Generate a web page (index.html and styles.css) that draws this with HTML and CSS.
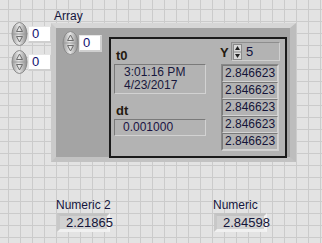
FILE: index.html
```html
<!DOCTYPE html>
<html lang="en">
<head>
  <meta charset="UTF-8">
  <title>Front Panel</title>
  <link rel="stylesheet" href="styles.css">
</head>
<body>
  <div class="panel">

    <div class="ctrl row1">
      <svg class="spin" width="17" height="24" viewBox="0 0 17 24">
        <defs>
          <linearGradient id="sg" x1="0" x2="1" y1="0" y2="0">
            <stop offset="0" stop-color="#9a9a9a"/>
            <stop offset="0.45" stop-color="#e8e8e8"/>
            <stop offset="1" stop-color="#8c8c8c"/>
          </linearGradient>
        </defs>
        <ellipse cx="8.5" cy="12" rx="7.5" ry="11.5" fill="url(#sg)" stroke="#8a8a8a"/>
        <line x1="2" y1="12" x2="15" y2="12" stroke="#9c9c9c"/>
        <path d="M8.5 4 L11.5 9.5 L5.5 9.5 Z" fill="none" stroke="#6e6e6e"/>
        <path d="M8.5 20 L11.5 14.5 L5.5 14.5 Z" fill="none" stroke="#6e6e6e"/>
      </svg>
      <div class="input">0</div>
    </div>

    <div class="ctrl row2">
      <svg class="spin" width="17" height="24" viewBox="0 0 17 24">
        <ellipse cx="8.5" cy="12" rx="7.5" ry="11.5" fill="url(#sg)" stroke="#8a8a8a"/>
        <line x1="2" y1="12" x2="15" y2="12" stroke="#9c9c9c"/>
        <path d="M8.5 4 L11.5 9.5 L5.5 9.5 Z" fill="none" stroke="#6e6e6e"/>
        <path d="M8.5 20 L11.5 14.5 L5.5 14.5 Z" fill="none" stroke="#6e6e6e"/>
      </svg>
      <div class="input">0</div>
    </div>

    <div class="array-ctl">
      <div class="label">Array</div>
      <div class="array-frame">
        <div class="ctrl index">
          <svg class="spin" width="17" height="24" viewBox="0 0 17 24">
            <ellipse cx="8.5" cy="12" rx="7.5" ry="11.5" fill="url(#sg)" stroke="#8a8a8a"/>
            <line x1="2" y1="12" x2="15" y2="12" stroke="#9c9c9c"/>
            <path d="M8.5 4 L11.5 9.5 L5.5 9.5 Z" fill="none" stroke="#6e6e6e"/>
            <path d="M8.5 20 L11.5 14.5 L5.5 14.5 Z" fill="none" stroke="#6e6e6e"/>
          </svg>
          <div class="input">0</div>
        </div>

        <div class="cluster">
          <div class="col-left">
            <div class="clabel t0">t0</div>
            <div class="timebox">
              <div>3:01:16 PM</div>
              <div>4/23/2017</div>
            </div>
            <div class="clabel dt">dt</div>
            <div class="dtbox">0.001000</div>
          </div>
          <div class="col-right">
            <div class="yrow">
              <div class="clabel">Y</div>
              <div class="yindex">
                <svg width="9" height="16" viewBox="0 0 9 16">
                  <rect x="0.5" y="0.5" width="8" height="15" fill="#d8d8d8" stroke="#8a8a8a"/>
                  <line x1="1" y1="8" x2="8" y2="8" stroke="#8a8a8a"/>
                  <path d="M4.5 2 L7 6 L2 6 Z" fill="#222"/>
                  <path d="M4.5 14 L7 10 L2 10 Z" fill="#222"/>
                </svg>
                <span>5</span>
              </div>
            </div>
            <div class="ylist">
              <div class="entry">2.846623</div>
              <div class="entry">2.846623</div>
              <div class="entry">2.846623</div>
              <div class="entry">2.846623</div>
              <div class="entry">2.846623</div>
            </div>
          </div>
        </div>
      </div>
    </div>

    <div class="ind num2">
      <div class="label">Numeric 2</div>
      <div class="display">2.21865</div>
    </div>

    <div class="ind num1">
      <div class="label">Numeric</div>
      <div class="display">2.84598</div>
    </div>

  </div>
</body>
</html>
```

FILE: styles.css
```css
body {
  margin: 0;
  font-family: "Liberation Sans", Arial, sans-serif;
  font-size: 12px;
  color: #14143c;
}
.panel {
  position: relative;
  width: 322px;
  height: 243px;
  overflow: hidden;
  background-color: #e3e3e3;
  background-image:
    linear-gradient(to right, #cbcbcb 1px, transparent 1px),
    linear-gradient(to bottom, #cbcbcb 1px, transparent 1px);
  background-size: 12px 12px;
  background-position: 8px 9px;
}

/* numeric controls */
.ctrl {
  display: flex;
  align-items: center;
}
.row1 { position: absolute; left: 11px; top: 22px; }
.row2 { position: absolute; left: 11px; top: 50px; }
.spin { display: block; }
.input {
  width: 18px;
  height: 14px;
  line-height: 14px;
  padding-left: 3px;
  background: #fff;
  border-top: 1px solid #e6e6e6;
  border-left: 1px solid #e6e6e6;
  border-right: 2px solid #cfcfcf;
  border-bottom: 2px solid #cfcfcf;
  font-size: 13px;
  color: #101070;
}

.label {
  color: #14143c;
  font-size: 12px;
  line-height: 14px;
}

/* array */
.array-ctl {
  position: absolute;
  left: 51px;
  top: 9px;
}
.array-ctl > .label { margin-left: 3px; margin-bottom: 0; }
.array-frame {
  width: 234px;
  height: 129px;
  display: flex;
  align-items: flex-start;
  background: #a4a4a4;
  border-style: solid;
  border-width: 5px 6px 5px 5px;
  border-color: #d6d6d6 #bdbdbd #c2c2c2 #cacaca;
}
.index { margin: 3px 0 0 6px; }
.index .input { width: 17px; }

.cluster {
  margin: 9px 0 0 7px;
  width: 174px;
  height: 117px;
  display: flex;
  background: #b3b3b3;
  border: 2px solid #1a1a1a;
}
.col-left {
  width: 92px;
  margin-left: 3px;
}
.clabel {
  font-weight: bold;
  color: #241a10;
  font-size: 13px;
  line-height: 14px;
}
.t0 { margin-top: 10px; margin-left: 2px; }
.timebox {
  margin-top: 1px;
  height: 27px;
  padding: 1px 0 0 9px;
  border: 1px solid #7a7a7a;
  border-right-color: #d2d2d2;
  border-bottom-color: #d2d2d2;
  line-height: 13px;
  color: #18183c;
}
.dt { margin-top: 10px; margin-left: 2px; }
.dtbox {
  margin-top: 1px;
  height: 15px;
  line-height: 15px;
  padding-left: 8px;
  border: 1px solid #7a7a7a;
  border-right-color: #d2d2d2;
  border-bottom-color: #d2d2d2;
  color: #1a1244;
}

.col-right {
  margin-left: 14px;
  width: 60px;
}
.yrow {
  display: flex;
  align-items: center;
  margin-top: 3px;
}
.yrow .clabel { width: 11px; margin-top: 3px; }
.yindex {
  display: flex;
  align-items: center;
  width: 47px;
  height: 17px;
  border: 1px solid #d0d0d0;
  border-top-color: #8e8e8e;
  border-left-color: #8e8e8e;
}
.yindex svg { margin-left: 1px; }
.yindex span {
  margin-left: 4px;
  font-size: 13px;
  color: #10103c;
}
.ylist {
  margin-top: 3px;
  margin-left: 1px;
  width: 56px;
  border: 1px solid #d0d0d0;
  border-top-color: #888;
  border-left-color: #888;
}
.entry {
  height: 15px;
  line-height: 15px;
  padding-left: 2px;
  border: 1px solid #7a7a7a;
  border-right-color: #d4d4d4;
  border-bottom-color: #d4d4d4;
  color: #141438;
}

/* indicators */
.ind { position: absolute; top: 198px; }
.num2 { left: 57px; }
.num1 { left: 214px; }
.ind .label { margin-left: -1px; margin-bottom: 1px; }
.display {
  width: 41px;
  height: 13px;
  line-height: 13px;
  padding-left: 6px;
  background: #d2d2d2;
  border-style: solid;
  border-width: 3px;
  border-color: #c3c3c3 #f4f4f4 #f0f0f0 #c8c8c8;
  font-size: 13px;
  color: #141438;
}
```
